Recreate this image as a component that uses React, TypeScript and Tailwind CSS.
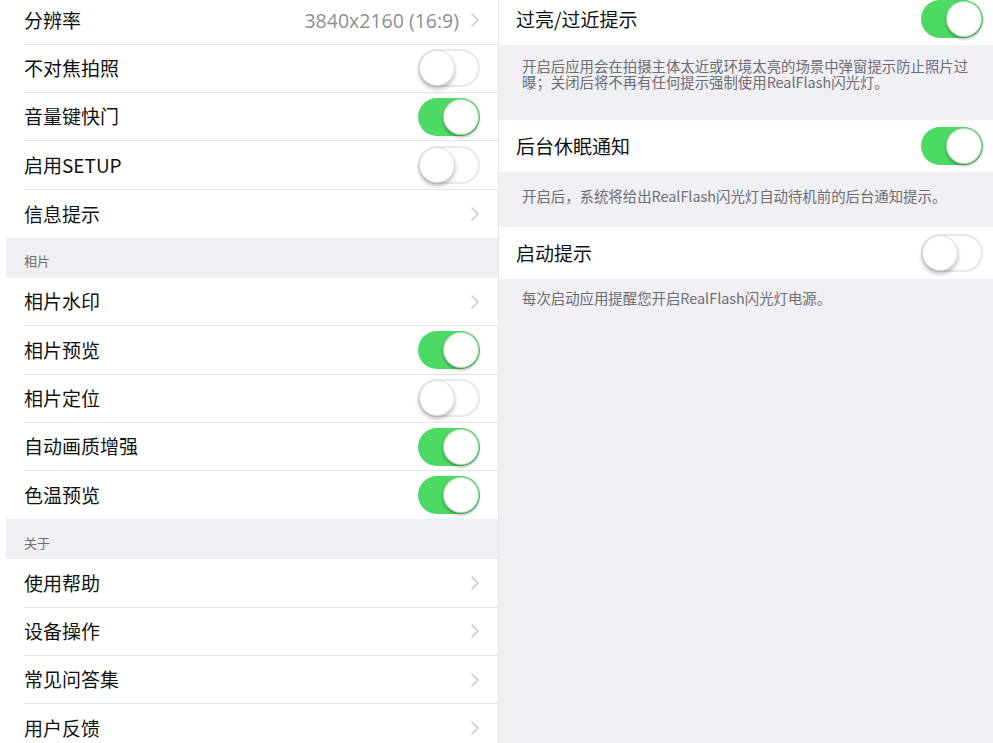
import React from "react";

const FONT = '"Noto Sans CJK SC", "Noto Sans", sans-serif';

function Toggle({ on }: { on: boolean }) {
  if (on) {
    return (
      <div className="relative w-[62px] h-[38px] rounded-full bg-[#4cd964] shrink-0">
        <div className="absolute right-[1px] top-[1px] w-[36px] h-[36px] rounded-full bg-white shadow-[0_2px_3px_rgba(0,0,0,0.3)] border border-[#3aa84f]/40" />
      </div>
    );
  }
  return (
    <div className="relative w-[62px] h-[38px] rounded-full bg-white border-2 border-[#e8e8ea] shrink-0">
      <div className="absolute left-[-1px] top-[-1px] w-[36px] h-[36px] rounded-full bg-white shadow-[0_3px_4px_rgba(0,0,0,0.25)] border border-[#dcdcdc]" />
    </div>
  );
}

function Chevron() {
  return (
    <svg width="10" height="16" viewBox="0 0 10 16" className="shrink-0">
      <path d="M2 2 L8 8 L2 14" fill="none" stroke="#c7c7cc" strokeWidth="1.5" strokeLinecap="round" strokeLinejoin="round" />
    </svg>
  );
}

type Item = { label: string; toggle?: boolean; value?: string; last?: boolean };

function LeftRow({ label, toggle, value, last }: Item) {
  return (
    <div className="bg-white pl-[24px]">
      <div
        className={`h-[48.3px] flex items-center justify-between pr-[18px] ${last ? "" : "border-b border-[#e3e3e6]"}`}
      >
        <span className="text-[19px] text-[#111]">{label}</span>
        <div className="flex items-center gap-[11px]">
          {value && (
            <span className="text-[19.5px] text-[#8e8e93]" style={{ fontFamily: '"Open Sans", "Noto Sans", sans-serif' }}>
              {value}
            </span>
          )}
          {toggle === undefined ? <Chevron /> : <Toggle on={toggle} />}
        </div>
      </div>
    </div>
  );
}

function Header({ title }: { title: string }) {
  return (
    <div className="pl-[6px] bg-white">
      <div className="h-[40px] bg-[#efeff4] flex items-end pb-[7px] pl-[18px]">
        <span className="text-[13px] text-[#6d6d72]">{title}</span>
      </div>
    </div>
  );
}

function RightRow({ label, on }: { label: string; on: boolean }) {
  return (
    <div className="h-[52px] bg-white flex items-center justify-between pl-[17px] pr-[10px]">
      <span className="text-[19px] text-[#111]">{label}</span>
      <Toggle on={on} />
    </div>
  );
}

export default function App() {
  return (
    <div className="w-[993px] h-[743px] overflow-hidden flex bg-[#efeff4]" style={{ fontFamily: FONT }}>
      <div className="w-[499px] shrink-0 bg-white mt-[-3.5px] border-r border-[#e6e6ea]">
        <LeftRow label="分辨率" value="3840x2160 (16:9)" />
        <LeftRow label="不对焦拍照" toggle={false} />
        <LeftRow label="音量键快门" toggle={true} />
        <LeftRow label="启用SETUP" toggle={false} />
        <LeftRow label="信息提示" last />
        <Header title="相片" />
        <LeftRow label="相片水印" />
        <LeftRow label="相片预览" toggle={true} />
        <LeftRow label="相片定位" toggle={false} />
        <LeftRow label="自动画质增强" toggle={true} />
        <LeftRow label="色温预览" toggle={true} last />
        <Header title="关于" />
        <LeftRow label="使用帮助" />
        <LeftRow label="设备操作" />
        <LeftRow label="常见问答集" />
        <LeftRow label="用户反馈" />
      </div>
      <div className="flex-1 mt-[-7px]">
        <RightRow label="过亮/过近提示" on={true} />
        <div className="h-[75px] pt-[13px] px-[23px] text-[14.4px] leading-[16px] text-[#6d6d72]">
          <p>开启后应用会在拍摄主体太近或环境太亮的场景中弹窗提示防止照片过</p>
          <p>曝；关闭后将不再有任何提示强制使用RealFlash闪光灯。</p>
        </div>
        <RightRow label="后台休眠通知" on={true} />
        <div className="h-[55px] pt-[16px] px-[23px] text-[14.4px] leading-[16px] text-[#6d6d72]">
          开启后，系统将给出RealFlash闪光灯自动待机前的后台通知提示。
        </div>
        <RightRow label="启动提示" on={false} />
        <div className="pt-[11px] px-[23px] text-[14.4px] leading-[16px] text-[#6d6d72]">
          每次启动应用提醒您开启RealFlash闪光灯电源。
        </div>
      </div>
    </div>
  );
}
